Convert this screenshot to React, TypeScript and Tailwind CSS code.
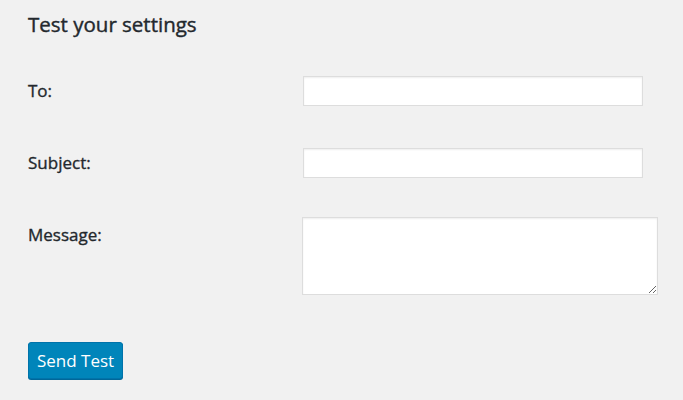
import React from 'react';

const font = { fontFamily: '"Open Sans", "Noto Sans", sans-serif' };

const labelCls =
  'text-[17px] leading-[24px] font-normal [-webkit-text-stroke:0.35px_#23282d]';

const fieldCls =
  'border border-[#dddddd] bg-white shadow-[inset_0_1px_2px_rgba(0,0,0,0.07)] outline-none';

export default function App() {
  return (
    <div
      className="min-h-[400px] w-full bg-[#f1f1f1] pl-[28px] pt-[9px] text-[#23282d]"
      style={font}
    >
      <h2 className="text-[20.5px] leading-[30px] font-normal [-webkit-text-stroke:0.4px_#23282d]">
        Test your settings
      </h2>

      <div className="mt-[37px] flex items-start">
        <label className={`w-[275px] pt-[3px] ${labelCls}`}>To:</label>
        <input type="text" className={`h-[30px] w-[340px] ${fieldCls}`} />
      </div>

      <div className="mt-[42px] flex items-start">
        <label className={`w-[275px] pt-[3px] ${labelCls}`}>Subject:</label>
        <input type="text" className={`h-[30px] w-[340px] ${fieldCls}`} />
      </div>

      <div className="mt-[39px] flex items-start">
        <label className={`w-[274px] pt-[6px] ${labelCls}`}>Message:</label>
        <textarea className={`h-[78px] w-[356px] ${fieldCls}`} />
      </div>

      <button className="mt-[47px] h-[37px] w-[95px] rounded-[3px] border border-[#0073aa] bg-[#0085ba] text-[17px] text-white shadow-[0_1px_0_#006799]">
        Send Test
      </button>
    </div>
  );
}
